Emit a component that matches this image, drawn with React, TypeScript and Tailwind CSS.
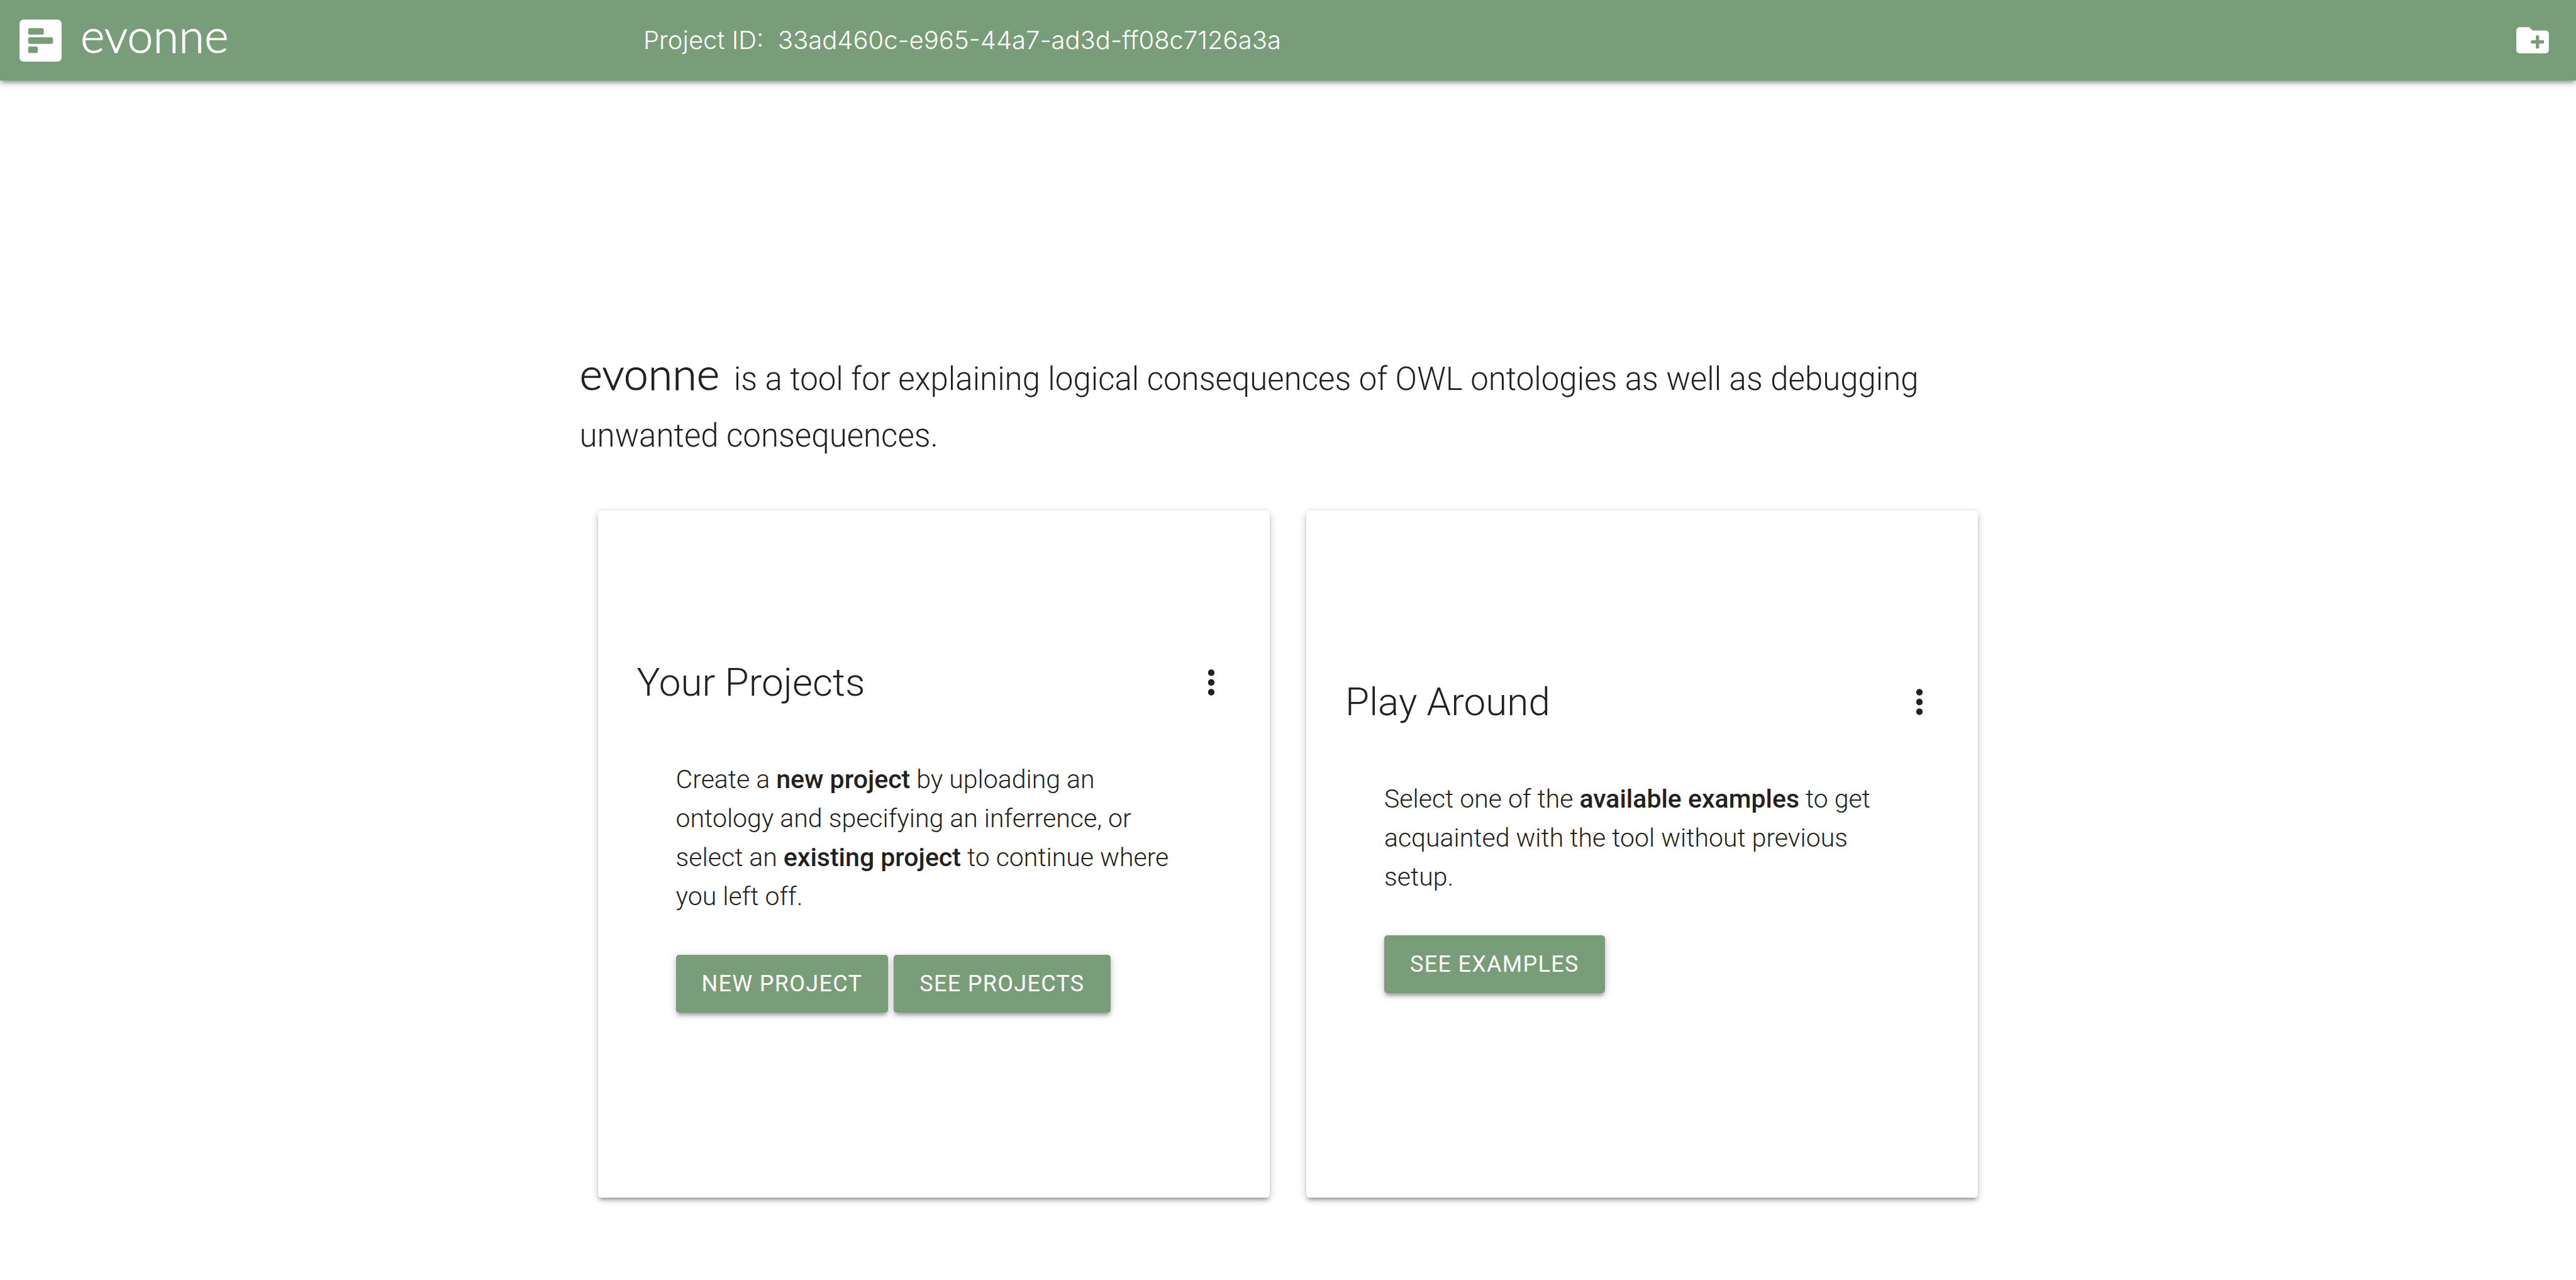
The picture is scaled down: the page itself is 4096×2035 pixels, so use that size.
import React from "react";

const raised =
  "shadow-[0_5px_5px_0_rgba(0,0,0,0.14),0_8px_3px_-5px_rgba(0,0,0,0.12),0_3px_13px_0_rgba(0,0,0,0.2)]";

const wordmark = "font-['Lato',sans-serif] font-light [-webkit-text-stroke:1px_currentColor]";

function Logo() {
  return (
    <svg className="size-[67px]" viewBox="0 0 78 78" fill="none" aria-hidden="true">
      <rect width="78" height="78" rx="8" fill="#fff" />
      <rect x="16" y="16" width="29" height="12" rx="3" fill="#799c79" />
      <rect x="16" y="33" width="46" height="12" rx="3" fill="#799c79" />
      <rect x="16" y="50" width="18" height="12" rx="3" fill="#799c79" />
    </svg>
  );
}

function MoreButton({ label }: { label: string }) {
  return (
    <button type="button" aria-label={label} className="size-[62px]">
      <svg viewBox="0 0 24 24" fill="currentColor" className="size-full">
        <path d="M12 8c1.1 0 2-.9 2-2s-.9-2-2-2-2 .9-2 2 .9 2 2 2zm0 2c-1.1 0-2 .9-2 2s.9 2 2 2 2-.9 2-2-.9-2-2-2zm0 6c-1.1 0-2 .9-2 2s.9 2 2 2 2-.9 2-2-.9-2-2-2z" />
      </svg>
    </button>
  );
}

function ActionButton({ children }: { children: React.ReactNode }) {
  return (
    <button
      type="button"
      className={`h-[92px] rounded-[5px] bg-[#799c79] px-[41px] text-[36px] font-normal tracking-[0.036em] text-white uppercase ${raised}`}
    >
      {children}
    </button>
  );
}

function Card({
  title,
  actions,
  children,
}: {
  title: string;
  actions: string[];
  children: React.ReactNode;
}) {
  return (
    <section
      className={`flex h-[1092px] flex-1 flex-col justify-center rounded-[5px] bg-white px-[62px] pb-[62px] ${raised}`}
    >
      <div className="flex items-center justify-between">
        <h2 className="text-[62px] leading-[82px]">{title}</h2>
        <MoreButton label={`${title} options`} />
      </div>
      <div className="px-[62px] pt-[82px]">
        <p className="text-[41px] leading-[62px]">{children}</p>
        <div className="mt-[62px] flex gap-[9px]">
          {actions.map((a) => (
            <ActionButton key={a}>{a}</ActionButton>
          ))}
        </div>
      </div>
    </section>
  );
}

export default function App() {
  return (
    <div className="min-h-screen bg-white font-['Roboto',sans-serif] font-light text-[#212121]">
      <header
        className={`flex h-[128px] items-center bg-[#799c79] pr-[38px] pl-[31px] text-white ${raised}`}
      >
        <div className="flex w-[992px] items-center gap-[30px]">
          <Logo />
          <span className={`pb-4 text-[74px] leading-[90px] ${wordmark}`}>evonne</span>
        </div>
        <p className="flex-1 font-['Inter',sans-serif] text-[40px] leading-[62px] whitespace-pre">
          {"Project ID:  33ad460c-e965-44a7-ad3d-ff08c7126a3a"}
        </p>
        <button type="button" aria-label="Create new project" className="size-[62px]">
          <svg viewBox="0 0 24 24" fill="currentColor" className="size-full">
            <path d="M20 6h-8l-2-2H4c-1.11 0-1.99.89-1.99 2L2 18c0 1.11.89 2 2 2h16c1.11 0 2-.89 2-2V8c0-1.11-.89-2-2-2zm-1 8h-3v3h-2v-3h-3v-2h3V9h2v3h3v2z" />
          </svg>
        </button>
      </header>
      <main className="mx-auto w-[55%] pt-[430px]">
        <p className="text-[51px] leading-[90px]">
          <span className={`mr-[10px] text-[70px] leading-[60px] ${wordmark}`}>evonne</span>{" "}
          is a tool for explaining logical consequences of OWL ontologies as well as debugging unwanted
          consequences.
        </p>
        <div className="mt-[74px] flex gap-[58px] px-[29px]">
          <Card title="Your Projects" actions={["New Project", "See Projects"]}>
            Create a <b className="font-medium">new project</b> by uploading an ontology and specifying an
            inferrence, or select an <b className="font-medium">existing project</b> to continue where you
            left off.
          </Card>
          <Card title="Play Around" actions={["See Examples"]}>
            Select one of the <b className="font-medium">available examples</b> to get acquainted with the
            tool without previous setup.
          </Card>
        </div>
      </main>
    </div>
  );
}
